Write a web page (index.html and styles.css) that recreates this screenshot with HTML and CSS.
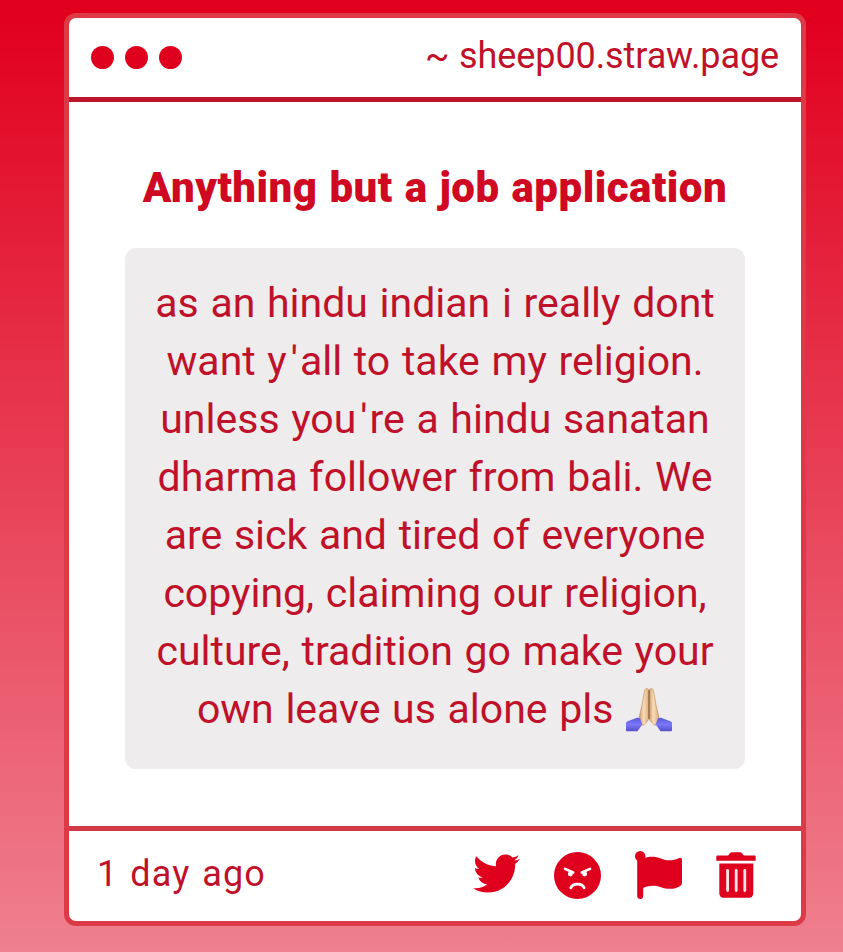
FILE: index.html
```html
<!DOCTYPE html>
<html lang="en">
<head>
  <meta charset="UTF-8" />
  <meta name="viewport" content="width=device-width, initial-scale=1.0"/>
  <title>sheep00.straw.page</title>
  <link rel="stylesheet" href="styles.css">
</head>
<body>

  <div class="card">
    <div class="card-header">
      <div class="dots">
        <span class="dot"></span>
        <span class="dot"></span>
        <span class="dot"></span>
      </div>
      <div class="site">~ sheep00.straw.page</div>
    </div>

    <div class="card-body">
      <h1>Anything but a job application</h1>
      <p class="message">
        as an hindu indian i really dont<br>
        want y<span class="apos">'</span>all to take my religion.<br>
        unless you<span class="apos">'</span>re a hindu sanatan<br>
        dharma follower from bali. We<br>
        are sick and tired of everyone<br>
        copying, claiming our religion,<br>
        culture, tradition go make your<br>
        own leave us alone pls
        <svg class="pray" viewBox="0 0 48 44" role="img" aria-label="Folded hands">
          <defs>
            <linearGradient id="skin" x1="0" x2="1">
              <stop offset="0" stop-color="#c99a6c"/>
              <stop offset="0.45" stop-color="#fbdcb8"/>
              <stop offset="1" stop-color="#d9ad80"/>
            </linearGradient>
            <linearGradient id="sleeve" x1="0" y1="0" x2="0" y2="1">
              <stop offset="0" stop-color="#5a58d8"/>
              <stop offset="0.5" stop-color="#7b78fa"/>
              <stop offset="1" stop-color="#5450c8"/>
            </linearGradient>
          </defs>
          <path d="M23.700 2C22.600 0 20.300 0 19.600 2.600L17 17L14.300 28.500L14.800 32L17.500 37.500C20.500 35.500 23.500 33 23.900 29.500Z" fill="url(#skin)" stroke="#c4935f" stroke-width=".7"/>
          <path d="M24.300 2C25.400 0 27.700 0 28.400 2.600L31 17L33.700 28.500L33.200 32L30.500 37.500C27.500 35.500 24.500 33 24.100 29.500Z" fill="url(#skin)" stroke="#c4935f" stroke-width=".7"/>
          <path d="M24 2V31" stroke="#80552f" stroke-width="1"/>
          <path d="M1 35Q1 34 2 33.500L12 29.800Q14.500 29.200 15.300 31L17.300 36.500L12.500 43.300H2Q1 43.300 1 42.300Z" fill="url(#sleeve)"/>
          <path d="M47 35Q47 34 46 33.500L36 29.800Q33.500 29.200 32.700 31L30.700 36.500L35.500 43.300H46Q47 43.300 47 42.300Z" fill="url(#sleeve)"/>
        </svg>
      </p>
    </div>

    <div class="card-footer">
      <div class="time">1 day ago</div>
      <div class="actions">
        <svg class="icon twitter" viewBox="0 0 24 20">
          <path d="M23.950 2.570a10 10 0 0 1-2.820.770 4.960 4.960 0 0 0 2.160-2.720c-.950.550-2 .950-3.130 1.180a4.920 4.920 0 0 0-8.380 4.480C7.690 6.090 4.070 4.130 1.640 1.160a4.820 4.820 0 0 0-.670 2.480c0 1.710.870 3.210 2.190 4.100a4.900 4.900 0 0 1-2.230-.620v.060a4.920 4.920 0 0 0 3.950 4.830 5 5 0 0 1-2.210.080 4.940 4.940 0 0 0 4.600 3.420A9.870 9.870 0 0 1 0 17.540a13.990 13.990 0 0 0 7.550 2.210c9.050 0 14-7.500 14-13.980 0-.210 0-.420-.020-.630a9.940 9.940 0 0 0 2.420-2.570z"/>
        </svg>
        <svg class="icon angry" viewBox="0 0 46 46">
          <circle cx="23" cy="23" r="23"/>
          <g class="face">
            <path d="M10.800 16.500L18.800 20M35.200 16.500L27.200 20" stroke-width="2.600"/>
            <circle cx="16" cy="21.500" r="1.900"/>
            <circle cx="30" cy="21.500" r="1.900"/>
            <path d="M16.500 35C18.500 30.300 27.500 30.300 29.500 35" stroke-width="2.800"/>
          </g>
        </svg>
        <svg class="icon flag" viewBox="0 0 48 48">
          <circle cx="5.200" cy="5.200" r="5.200"/>
          <path d="M2.200 6H8.200V45A3 3 0 0 1 2.200 45Z"/>
          <path d="M8 7.600C13 5.300 20 5 26 7.500C32 10.200 38 9.800 43.500 7.200Q47 5.700 47 9V32Q47 34.200 44.500 35.400C38 38.800 32 38.300 26 36.200C20 34 14 34.500 8 37Z"/>
        </svg>
        <svg class="icon trash" viewBox="0 0 40 46">
          <path d="M1.500 3.500H12L14 1.200Q14.800 .3 16 .3H24Q25.200 .3 26 1.200L28 3.500H38.500Q39.700 3.500 39.700 4.700V8.700H.3V4.700Q.3 3.500 1.500 3.500Z"/>
          <path d="M3.300 11.500H37.300V41.500A4.200 4.200 0 0 1 33.100 45.700H7.500A4.200 4.200 0 0 1 3.300 41.500Z"/>
          <path class="slots" d="M11.600 18.500V38.500M20.200 18.500V38.500M28.800 18.500V38.500"/>
        </svg>
      </div>
    </div>
  </div>

</body>
</html>
```
FILE: styles.css
```css
* {
  box-sizing: border-box;
  margin: 0;
  padding: 0;
}

body {
  height: 952px;
  padding: 13px 37px 0 64px;
  font-family: Roboto, sans-serif;
  color: #bf1129;
  background: linear-gradient(#e1001e 0, #e1001e 15px, #ef808f 952px);
  overflow: hidden;
}

.card {
  display: flex;
  flex-direction: column;
  height: 913px;
  border: 5px solid #dc3a47;
  border-radius: 12px;
  background-color: white;
}

.card-header {
  display: flex;
  justify-content: space-between;
  align-items: center;
  height: 84px;
  padding: 0 22px;
  border-bottom: 5px solid #bb152b;
}

.dots {
  display: flex;
  gap: 11px;
}

.dot {
  width: 23px;
  height: 23px;
  border-radius: 50%;
  background-color: #df001e;
}

.site,
.time {
  font-size: 36px;
  white-space: nowrap;
}

.site {
  padding-bottom: 3px;
  letter-spacing: -0.1px;
  word-spacing: 1px;
}

.time {
  padding-bottom: 5px;
  letter-spacing: 1.1px;
  word-spacing: 2px;
}

.card-body {
  flex: 1;
  padding: 61px 56px 0;
  text-align: center;
}

h1 {
  font-size: 42px;
  font-weight: 900;
  line-height: 50px;
  letter-spacing: 0.5px;
  word-spacing: 1px;
  color: #cf0922;
  white-space: nowrap;
}

.message {
  height: 521px;
  margin-top: 35px;
  padding-top: 26px;
  border-radius: 11px;
  background-color: #eeecec;
  font-size: 41px;
  font-weight: 450;
  line-height: 58px;
  letter-spacing: 0;
  word-spacing: 1.5px;
  white-space: nowrap;
}

.apos {
  margin: 0 2px 0 4px;
}

.pray {
  width: 48px;
  height: 44px;
  margin-bottom: -9px;
  vertical-align: baseline;
}

.card-footer {
  display: flex;
  justify-content: space-between;
  align-items: center;
  height: 95px;
  padding: 0 45px 0 28px;
  border-top: 5px solid #d33a47;
}

.actions {
  display: flex;
  align-items: center;
  padding-bottom: 2px;
}

.icon {
  fill: #df001e;
}

.twitter {
  width: 47px;
  height: 39px;
  margin: 0 34px 4px 0;
}

.angry {
  width: 47px;
  height: 47px;
  margin-right: 34px;
}

.face {
  fill: white;
  stroke: white;
  stroke-linecap: round;
}

.face path {
  fill: none;
}

.flag {
  width: 48px;
  height: 48px;
  margin-right: 33px;
}

.trash {
  width: 40px;
  height: 46px;
}

.slots {
  fill: none;
  stroke: #fbe5e8;
  stroke-width: 2.8;
  stroke-linecap: round;
}
```
